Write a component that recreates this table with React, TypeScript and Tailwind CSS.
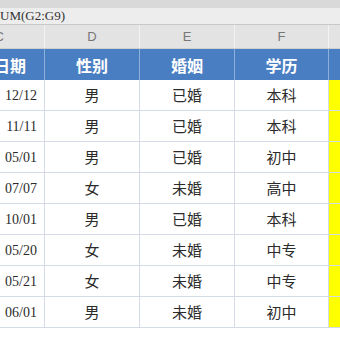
const rows = [
  { date: '12/12', sex: '男', mar: '已婚', edu: '本科' },
  { date: '11/11', sex: '男', mar: '已婚', edu: '本科' },
  { date: '05/01', sex: '男', mar: '已婚', edu: '初中' },
  { date: '07/07', sex: '女', mar: '未婚', edu: '高中' },
  { date: '10/01', sex: '男', mar: '已婚', edu: '本科' },
  { date: '05/20', sex: '女', mar: '未婚', edu: '中专' },
  { date: '05/21', sex: '女', mar: '未婚', edu: '中专' },
  { date: '06/01', sex: '男', mar: '未婚', edu: '初中' },
]

const cjk = { fontFamily: '"Noto Sans CJK SC", sans-serif' }
const serif = { fontFamily: '"Liberation Serif", "Noto Sans CJK SC", serif' }

export default function App() {
  return (
    <div className="w-[340px] h-[340px] overflow-hidden bg-white">
      {/* toolbar strip */}
      <div className="h-[8px] bg-[#d9d9d9]" />
      {/* formula bar */}
      <div className="h-[17px] bg-[#ededed] border-b border-[#c8c8c8] flex items-center text-[13px] text-[#333]" style={serif}>
        UM(G2:G9)
      </div>
      {/* column letters */}
      <div className="h-[24px] bg-[#e3e3e3] flex text-[13px] text-[#777] border-b border-[#cfcfcf]" style={{ fontFamily: '"Liberation Sans", sans-serif' }}>
        <div className="w-[45px] border-r border-[#f2f2f2] flex items-center justify-end pr-[40px]">C</div>
        <div className="w-[95px] border-r border-[#f2f2f2] flex items-center justify-center">D</div>
        <div className="w-[95px] border-r border-[#f2f2f2] flex items-center justify-center">E</div>
        <div className="w-[94px] border-r border-[#f2f2f2] flex items-center justify-center">F</div>
        <div className="flex-1" />
      </div>
      {/* blue header */}
      <div className="h-[31px] bg-[#4a7ec2] flex text-white text-[16px] font-bold" style={cjk}>
        <div className="w-[45px] border-r border-[#8fb0dc] flex items-center justify-end pr-[18px] whitespace-nowrap overflow-hidden">日期</div>
        <div className="w-[95px] border-r border-[#8fb0dc] flex items-center justify-center">性别</div>
        <div className="w-[95px] border-r border-[#8fb0dc] flex items-center justify-center">婚姻</div>
        <div className="w-[94px] border-r border-[#8fb0dc] flex items-center justify-center">学历</div>
        <div className="flex-1" />
      </div>
      {/* data rows */}
      {rows.map((r, i) => (
        <div key={i} className="h-[31px] flex border-b border-[#d4dbe6] text-[#2b2b2b]">
          <div className="w-[45px] border-r border-[#d4dbe6] flex items-center justify-end pr-[7px] text-[14px]" style={serif}>{r.date}</div>
          <div className="w-[95px] border-r border-[#d4dbe6] flex items-center justify-center text-[15px]" style={cjk}>{r.sex}</div>
          <div className="w-[95px] border-r border-[#d4dbe6] flex items-center justify-center text-[15px]" style={cjk}>{r.mar}</div>
          <div className="w-[94px] border-r border-[#d4dbe6] flex items-center justify-center text-[15px]" style={cjk}>{r.edu}</div>
          <div className="flex-1 bg-[#ffff00]" />
        </div>
      ))}
    </div>
  )
}
